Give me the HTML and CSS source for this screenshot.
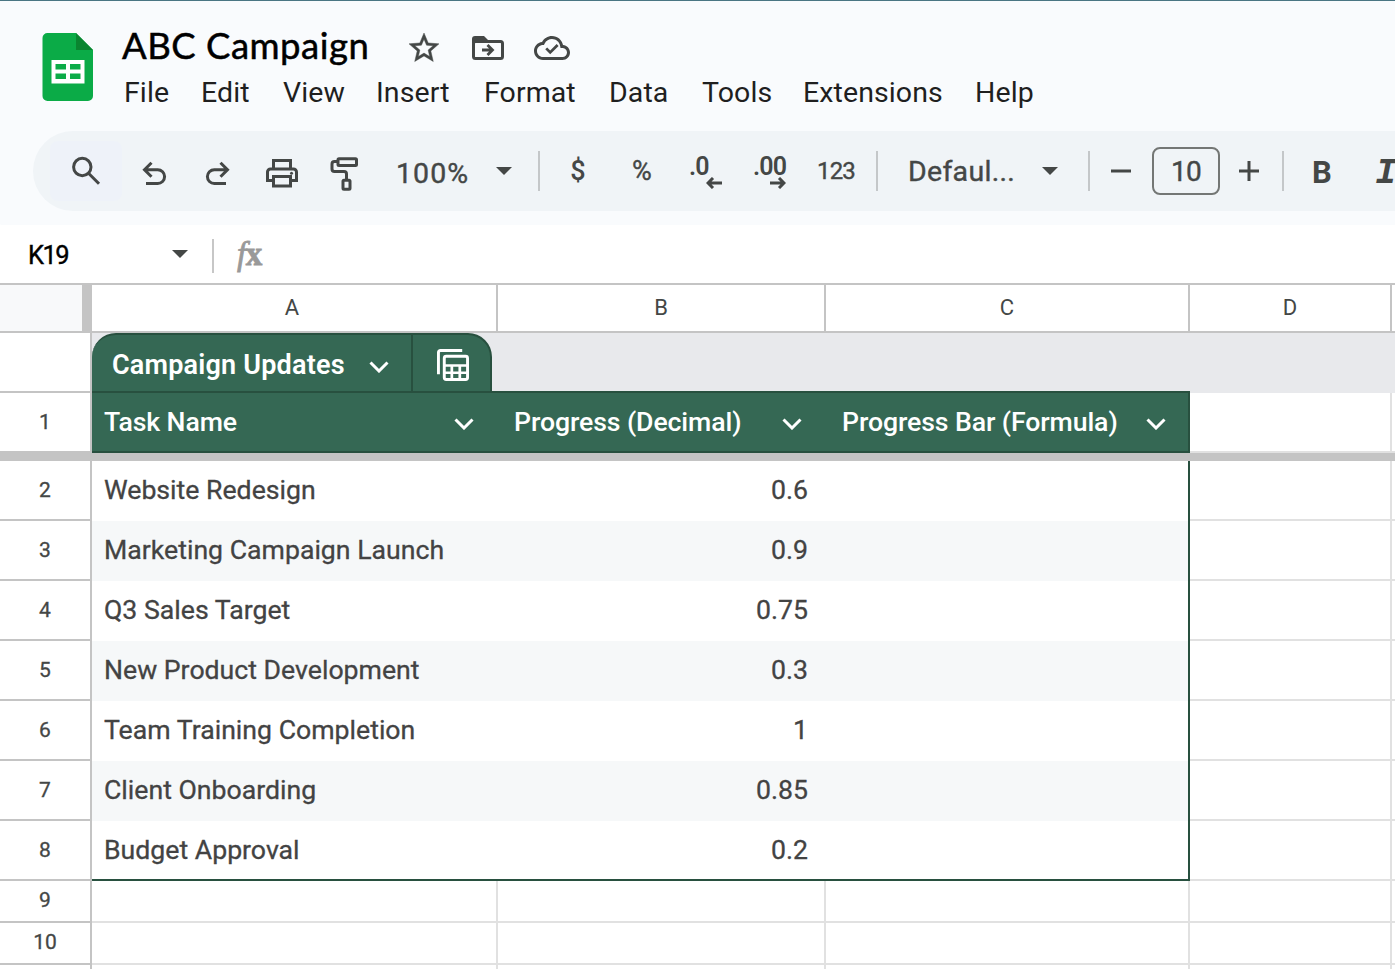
FILE: index.html
```html
<!DOCTYPE html>
<html lang="en">
<head>
    <meta charset="UTF-8">
    <meta name="viewport" content="width=device-width, initial-scale=1.0">
    <title>ABC Campaign</title>
    <link rel="stylesheet" href="styles.css">
</head>
<body>
    <header class="header">
        <svg class="logo" width="52" height="70" viewBox="0 0 52 70">
            <path d="M5.500 1h28.500l17 17v46a5 5 0 0 1-5 5H5.500a5 5 0 0 1-5-5V6a5 5 0 0 1 5-5z" fill="#0bab47"/>
            <path d="M34 1l17 17H34z" fill="#0a8530"/>
            <path fill="#fff" fill-rule="evenodd" d="M9.500 28h33v23.500h-33zM13.500 32v5.500H24V32zM28 32v5.500h10.500V32zM13.500 41.500V47H24v-5.500zM28 41.500V47h10.500v-5.500z"/>
        </svg>
        <div class="heading">
            <div class="title-row">
                <h1 class="title">ABC Campaign</h1>
                <svg class="star" width="36" height="36" viewBox="0 0 24 24" fill="#444746" stroke="#444746" stroke-width="0.300"><path d="M22 9.240l-7.190-.62L12 2 9.190 8.630 2 9.240l5.460 4.730L5.820 21 12 17.270 18.180 21l-1.630-7.030L22 9.240zM12 15.400l-3.760 2.270 1-4.280-3.320-2.880 4.380-.38L12 6.100l1.710 4.040 4.380.38-3.320 2.880 1 4.280L12 15.400z"/></svg>
                <svg class="move" width="32" height="24" viewBox="0 0 32 24">
                    <path d="M0 7V3a3 3 0 0 1 3-3h9l4 4v3z" fill="#444746"/>
                    <rect x="1.500" y="5.500" width="29" height="17" rx="2" fill="none" stroke="#444746" stroke-width="3"/>
                    <path d="M10 14h10M15.500 9l5 5-5 5" fill="none" stroke="#444746" stroke-width="2.800"/>
                </svg>
                <svg class="cloud" width="36" height="36" viewBox="0 0 24 24" fill="#444746"><path d="M19.350 10.040C18.670 6.590 15.640 4 12 4 9.110 4 6.600 5.640 5.350 8.040 2.340 8.360 0 10.910 0 14c0 3.310 2.690 6 6 6h13c2.760 0 5-2.240 5-5 0-2.640-2.050-4.780-4.650-4.960zM19 18H6c-2.210 0-4-1.790-4-4 0-2.050 1.530-3.760 3.560-3.970l1.070-.11.5-.95C8.080 7.140 9.940 6 12 6c2.620 0 4.880 1.860 5.390 4.430l.3 1.500 1.530.11c1.560.1 2.780 1.410 2.780 2.960 0 1.650-1.350 3-3 3z"/><path d="M10.800 16.200l-3.300-3.300 1.300-1.300 2 2 4.300-4.300 1.300 1.300z"/></svg>
            </div>
            <nav class="menu">
                <span>File</span>
                <span>Edit</span>
                <span>View</span>
                <span>Insert</span>
                <span>Format</span>
                <span>Data</span>
                <span>Tools</span>
                <span>Extensions</span>
                <span>Help</span>
            </nav>
        </div>
    </header>

    <div class="toolbar">
        <div class="tool search"><svg class="icon" viewBox="0 0 40 40"><circle cx="16.300" cy="16" r="8.700"/><path d="M22.500 22.200L33 32.700"/></svg></div>
        <div class="tool"><svg class="icon" viewBox="0 0 40 40"><path d="M12 32.500h11.700a6.900 6.900 0 0 0 0-13.800H11M17.500 11.700l-7 7 7 7"/></svg></div>
        <div class="tool"><svg class="icon" viewBox="0 0 40 40"><path d="M28 32.500H16.300a6.900 6.900 0 0 1 0-13.800H29M22.500 11.700l7 7-7 7"/></svg></div>
        <div class="tool"><svg class="icon" viewBox="0 0 40 40"><path d="M11.500 17.500v-8h17v8M11.500 29.500h-6V21a3 3 0 0 1 3-3h23a3 3 0 0 1 3 3v8.500h-6M11.500 25.500h17v9.500h-17z"/><circle class="dot" cx="29.500" cy="22.300" r="1.500"/></svg></div>
        <div class="tool"><svg class="icon" viewBox="0 0 40 40"><rect x="14" y="7.700" width="18.500" height="6.800" rx="1"/><path d="M13 10.500h-2.500a2.500 2.500 0 0 0-2.500 2.500v5a2.500 2.500 0 0 0 2.500 2.500H20a2.500 2.500 0 0 1 2.500 2.500v6"/><rect x="19" y="29.200" width="7" height="9" rx="1"/></svg></div>
        <div class="tool label zoom">100%</div>
        <div class="tool"><span class="caret"></span></div>
        <div class="tool"><span class="divider"></span></div>
        <div class="tool sign">$</div>
        <div class="tool sign percent">%</div>
        <div class="tool decimal less"><span>.0</span><svg width="16" height="12" viewBox="0 0 16 12"><path d="M16 6H2M7 1L2 6l5 5"/></svg></div>
        <div class="tool decimal more"><span>.00</span><svg width="16" height="12" viewBox="0 0 16 12"><path d="M0 6h14M9 1l5 5-5 5"/></svg></div>
        <div class="tool numbers">123</div>
        <div class="tool"><span class="divider"></span></div>
        <div class="tool label font">Defaul...</div>
        <div class="tool"><span class="caret"></span></div>
        <div class="tool"><span class="divider"></span></div>
        <div class="tool"><svg width="20" height="20" viewBox="0 0 20 20"><path d="M0 10h20"/></svg></div>
        <div class="tool"><span class="size">10</span></div>
        <div class="tool"><svg width="20" height="20" viewBox="0 0 20 20"><path d="M0 10h20M10 0v20"/></svg></div>
        <div class="tool"><span class="divider"></span></div>
        <div class="tool bold">B</div>
        <div class="tool italic">I</div>
    </div>

    <div class="formula-bar">
        <span class="cell-name">K19</span>
        <span class="caret"></span>
        <span class="bar-divider"></span>
        <span class="fx"><i>f</i><b>x</b></span>
    </div>

    <main class="sheet">
        <div class="row letters">
            <div class="corner"></div>
            <div class="first">A</div>
            <div>B</div>
            <div>C</div>
            <div>D</div>
            <div></div>
        </div>

        <div class="band">
            <div class="gutter"></div>
            <div class="band-table">
                <div class="tab">
                    <div class="tab-name">
                        <span>Campaign Updates</span>
                        <svg class="chevron" width="20" height="12" viewBox="0 0 20 12"><path d="M1.500 1.500L10 10l8.500-8.500"/></svg>
                    </div>
                    <div class="tab-view">
                        <svg width="32" height="32" viewBox="0 0 33 33" fill="none" stroke="#fff">
                            <path d="M1.500 26V3.500a2 2 0 0 1 2-2H26" stroke-width="3"/>
                            <rect x="7.500" y="7.500" width="24" height="24" rx="2" stroke-width="3"/>
                            <path d="M7 17h24M7 24.500h24M15.300 17v14M23.500 17v14" stroke-width="2.800"/>
                        </svg>
                    </div>
                </div>
            </div>
        </div>

        <div class="row table-head">
            <div class="gutter">1</div>
            <div class="th"><span>Task Name</span><svg class="chevron" width="20" height="12" viewBox="0 0 20 12"><path d="M1.500 1.500L10 10l8.500-8.500"/></svg></div>
            <div class="th"><span>Progress (Decimal)</span><svg class="chevron" width="20" height="12" viewBox="0 0 20 12"><path d="M1.500 1.500L10 10l8.500-8.500"/></svg></div>
            <div class="th last"><span>Progress Bar (Formula)</span><svg class="chevron" width="20" height="12" viewBox="0 0 20 12"><path d="M1.500 1.500L10 10l8.500-8.500"/></svg></div>
            <div class="cell"></div>
            <div class="cell"></div>
        </div>
        <div class="freeze"></div>

        <div class="row data"><div class="gutter">2</div><div class="td">Website Redesign</div><div class="td num">0.6</div><div class="td last"></div><div class="cell"></div><div class="cell"></div></div>
        <div class="row data alt"><div class="gutter">3</div><div class="td">Marketing Campaign Launch</div><div class="td num">0.9</div><div class="td last"></div><div class="cell"></div><div class="cell"></div></div>
        <div class="row data"><div class="gutter">4</div><div class="td">Q3 Sales Target</div><div class="td num">0.75</div><div class="td last"></div><div class="cell"></div><div class="cell"></div></div>
        <div class="row data alt"><div class="gutter">5</div><div class="td">New Product Development</div><div class="td num">0.3</div><div class="td last"></div><div class="cell"></div><div class="cell"></div></div>
        <div class="row data"><div class="gutter">6</div><div class="td">Team Training Completion</div><div class="td num">1</div><div class="td last"></div><div class="cell"></div><div class="cell"></div></div>
        <div class="row data alt"><div class="gutter">7</div><div class="td">Client Onboarding</div><div class="td num">0.85</div><div class="td last"></div><div class="cell"></div><div class="cell"></div></div>
        <div class="row data end"><div class="gutter">8</div><div class="td">Budget Approval</div><div class="td num">0.2</div><div class="td last"></div><div class="cell"></div><div class="cell"></div></div>

        <div class="row empty"><div class="gutter">9</div><div class="cell"></div><div class="cell"></div><div class="cell"></div><div class="cell"></div><div class="cell"></div></div>
        <div class="row empty"><div class="gutter">10</div><div class="cell"></div><div class="cell"></div><div class="cell"></div><div class="cell"></div><div class="cell"></div></div>
        <div class="row empty"><div class="gutter"></div><div class="cell"></div><div class="cell"></div><div class="cell"></div><div class="cell"></div><div class="cell"></div></div>
    </main>
</body>
</html>
```
FILE: styles.css
```css
* {
    box-sizing: border-box;
}
body {
    margin: 0;
    height: 969px;
    overflow: hidden;
    background: #fff;
    font-family: Roboto, "Liberation Sans", sans-serif;
    color: #444746;
}
svg {
    display: block;
    flex: none;
}

/* header */
.header {
    display: flex;
    height: 131px;
    padding-left: 42px;
    background: #f9fbfd;
    border-top: 1px solid #4a7683;
}
.logo {
    margin-top: 31px;
}
.heading {
    margin-left: 28px;
}
.title-row {
    display: flex;
    align-items: center;
    height: 50px;
    margin-top: 22px;
}
.title {
    width: 287px;
    margin: 0;
    padding-bottom: 5px;
    font-family: Lato, Roboto, sans-serif;
    font-size: 36.500px;
    font-weight: 400;
    line-height: 45px;
    letter-spacing: 0.5px;
    white-space: nowrap;
    color: #000;
    -webkit-text-stroke: 0.5px #000;
}
.star {
    margin-left: -3px;
}
.move {
    margin-left: 30px;
}
.cloud {
    margin-left: 30px;
}
.menu {
    display: grid;
    grid-template-columns: 77px 82px 93px 108px 125px 93px 101px 172px 80px;
    padding-left: 2px;
    margin-top: 2px;
    font-size: 28.500px;
    line-height: 36px;
    letter-spacing: 0.1px;
    color: #1f1f1f;
}

/* toolbar */
.toolbar {
    display: grid;
    grid-template-columns: 72px 64px 64px 64px 60px 106px 48px 22px 56px 72px 56px 72px 60px 22px 142px 40px 38px 26px 104px 22px 46px 32px 96px;
    height: 80px;
    padding-left: 17px;
    margin-left: 33px;
    border-radius: 40px 0 0 40px;
    background: #f0f4f7;
    overflow: hidden;
    box-shadow: 0 0 0 50px #f9fbfd;
}
.tool {
    display: flex;
    align-items: center;
    justify-content: center;
    white-space: nowrap;
}
.tool svg {
    fill: none;
    stroke: #444746;
    stroke-width: 3;
}
.tool .icon {
    width: 40px;
    height: 40px;
    overflow: visible;
}
.tool .dot {
    fill: #444746;
    stroke: none;
}
.search {
    height: 60px;
    margin: 10px 0;
    background: #eef2f9;
    border-radius: 8px;
}
.label {
    justify-content: flex-start;
    font-size: 28.500px;
    -webkit-text-stroke: 0.4px #444746;
}
.zoom {
    padding: 4px 0 0 22px;
    letter-spacing: 1.1px;
}
.font {
    padding-left: 20px;
    letter-spacing: 0.3px;
}
.caret {
    width: 0;
    height: 0;
    border: 8px solid transparent;
    border-top-color: #444746;
    border-bottom: 0;
}
.divider {
    width: 2px;
    height: 40px;
    background: #c4c7c9;
}
.sign {
    font-size: 27px;
    font-weight: 500;
}
.percent {
    font-weight: 400;
    -webkit-text-stroke: 0.4px #444746;
}
.numbers {
    font-size: 24px;
    -webkit-text-stroke: 0.4px #444746;
    letter-spacing: -0.8px;
}
.decimal {
    flex-direction: column;
    align-items: flex-start;
    justify-content: flex-start;
    padding-top: 23px;
    font-size: 25px;
    font-weight: 600;
    line-height: 26px;
    letter-spacing: -0.8px;
}
.less {
    padding-left: 11px;
}
.more {
    padding-left: 19px;
}
.decimal svg {
    margin: -3px 0 0 17px;
}
.size {
    width: 68px;
    height: 48px;
    border: 2px solid #747775;
    border-radius: 8px;
    font-size: 28px;
    line-height: 45px;
    letter-spacing: -0.8px;
    text-align: center;
    -webkit-text-stroke: 0.4px #444746;
}
.bold {
    padding-top: 3px;
    font-size: 31px;
    font-weight: 700;
}
.italic {
    padding-top: 4px;
    font-family: "Liberation Mono", monospace;
    font-size: 36px;
    font-weight: 700;
    font-style: italic;
}

/* formula bar */
.formula-bar {
    position: relative;
    display: flex;
    align-items: center;
    height: 58px;
    margin-top: 14px;
    padding-left: 28px;
    background: #fff;
}
.cell-name {
    width: 144px;
    padding-top: 1px;
    font-size: 25.500px;
    line-height: 30px;
    letter-spacing: -1.5px;
    color: #000;
    -webkit-text-stroke: 0.4px #000;
}
.bar-divider {
    width: 2px;
    height: 34px;
    margin: 4px 0 0 24px;
    background: #c7c7c7;
}
.fx {
    margin-left: 23px;
    font-family: "Liberation Serif", serif;
    font-size: 33px;
    line-height: 40px;
    letter-spacing: -0.5px;
    color: #999;
    -webkit-text-stroke: 0.8px #999;
}

/* grid */
.sheet {
    border-top: 2px solid #c4c4c4;
}
.row {
    display: grid;
    grid-template-columns: 92px 406px 328px 364px 202px 1fr;
    height: 60px;
}
.letters {
    height: 48px;
    font-size: 22px;
    line-height: 46px;
    text-align: center;
}
.letters div {
    border-right: 2px solid #c4c4c4;
    border-bottom: 2px solid #c4c4c4;
}
.letters .corner {
    border-right-width: 10px;
    background: #f8f9fa;
}
.letters .first {
    padding-right: 4px;
}
.gutter {
    display: flex;
    align-items: center;
    justify-content: center;
    border-right: 2px solid #c4c4c4;
    border-bottom: 2px solid #c4c4c4;
    font-size: 21px;
    -webkit-text-stroke: 0.3px #444746;
}
.cell {
    border-right: 2px solid #e1e1e1;
    border-bottom: 2px solid #e1e1e1;
}
.row > div:last-child {
    border-right: 0;
}
.band {
    display: grid;
    grid-template-columns: 92px 1098px;
    height: 60px;
    background: #e8e9ec;
}
.band .gutter {
    background: #fff;
}
.band-table {
    border-bottom: 2px solid #28503f;
}
.tab {
    display: flex;
    width: 400px;
    height: 58px;
    border: 2px solid #28503f;
    border-width: 2px 2px 0 0;
    border-radius: 24px 24px 0 0;
    background: #356854;
    color: #fff;
}
.tab-name {
    display: flex;
    align-items: center;
    width: 321px;
    padding-left: 20px;
    padding-top: 3px;
    border-right: 2px solid #28503f;
    font-size: 27px;
    font-weight: 600;
    white-space: nowrap;
}
.tab-name span {
    width: 257px;
    letter-spacing: 0.2px;
}
.tab-name .chevron {
    margin-top: 5px;
}
.tab-view {
    padding: 14px 0 0 24px;
}
.chevron {
    fill: none;
    stroke: #fff;
    stroke-width: 3;
}
.th {
    display: flex;
    align-items: center;
    justify-content: space-between;
    padding: 0 24px 0 16px;
    background: #356854;
    border-bottom: 2px solid #28503f;
    color: #fff;
    font-size: 26.670px;
    font-weight: 500;
    letter-spacing: -0.1px;
    white-space: nowrap;
}
.th:nth-child(2) {
    padding-left: 12px;
}
.th.last {
    padding-right: 22px;
    border-right: 2px solid #28503f;
}
.th .chevron {
    margin-top: 4px;
}
.freeze {
    height: 8px;
    background: #c4c4c4;
}
.td {
    padding: 0 12px;
    font-size: 26.670px;
    line-height: 58px;
    white-space: nowrap;
    color: #434343;
    -webkit-text-stroke: 0.3px #434343;
}
.num {
    padding-right: 18px;
    text-align: right;
}
.td.last {
    border-right: 2px solid #28503f;
}
.alt .td {
    background: #f6f8f9;
}
.end .td {
    border-bottom: 2px solid #28503f;
}
.empty {
    height: 42px;
}
.empty .gutter {
    padding-bottom: 2px;
}
```
